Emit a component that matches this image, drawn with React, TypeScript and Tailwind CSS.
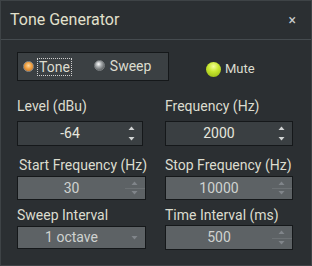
import React from "react";

const FONT = { fontFamily: 'Roboto, "Liberation Sans", sans-serif' };

function Spin({ disabled }: { disabled?: boolean }) {
  const c = disabled ? "#80858a" : "#d0d3d3";
  return (
    <div className="relative flex w-[20px] flex-col items-center justify-between py-[4px] pr-[2px]">
      {disabled && <div className="absolute left-0 right-0 top-1/2 h-px bg-[#6c7174]" />}
      <svg width="7" height="4" viewBox="0 0 7 4">
        <path d="M0.5 4 L3.5 0.5 L6.5 4 Z" fill={c} />
      </svg>
      <svg width="7" height="4" viewBox="0 0 7 4">
        <path d="M0.5 0 L3.5 3.5 L6.5 0 Z" fill={c} />
      </svg>
    </div>
  );
}

function NumBox({ value, disabled, w, h }: { value: string; disabled?: boolean; w: string; h: string }) {
  return (
    <div
      className={`flex ${w} ${h} border border-[#15181a] ${
        disabled ? "bg-[#5d6265] text-[#cfd2d0]" : "bg-[#3a3f42] text-[#e6e6de]"
      }`}
    >
      <div className="flex flex-1 items-center justify-center text-[14px]">{value}</div>
      <Spin disabled={disabled} />
    </div>
  );
}

function Radio({ on }: { on?: boolean }) {
  return (
    <span
      className={`inline-block h-[11px] w-[11px] rounded-full border ${
        on
          ? "border-[#8a8a86] bg-[radial-gradient(circle_at_50%_40%,#ffd9a0_0%,#f0a040_45%,#c06a20_100%)]"
          : "border-[#7a7e80] bg-[radial-gradient(circle_at_40%_35%,#ffffff_0%,#a8acae_35%,#3a3e40_100%)]"
      }`}
    />
  );
}

export default function App() {
  return (
    <div style={FONT} className="flex h-[266px] w-[312px] flex-col border border-[#3e4346] bg-[#2b2f32] text-[#dcdccf]">
      <div className="flex h-[39px] shrink-0 items-center justify-between border-b border-[#454b4f] pl-[9px] pr-[15px]">
        <span className="text-[16px] text-[#e2e0cc]">Tone Generator</span>
        <span className="text-[14px] text-[#c8cccc]">×</span>
      </div>

      <div className="px-[16px] pt-[12px]">
        <div className="flex items-center">
          <div className="flex h-[29px] w-[152px] items-center border border-[#15181a] bg-[#3b4043] pl-[5px] text-[14px]">
            <Radio on />
            <span className="ml-[3px] border border-dotted border-[#d0d0d0] px-px leading-[16px]">Tone</span>
            <span className="ml-[22px]">
              <Radio />
            </span>
            <span className="ml-[5px]">Sweep</span>
          </div>
          <div className="ml-[37px] mt-[5px] flex items-center">
            <span className="inline-block h-[15px] w-[15px] rounded-full bg-[radial-gradient(circle_at_50%_30%,#f4ff9a_0%,#c8e830_40%,#8fb010_100%)]" />
            <span className="ml-[4px] text-[13px]">Mute</span>
          </div>
        </div>

        <div className="mt-[15px] grid grid-cols-[148px_128px] text-[14px]">
          <div className="whitespace-nowrap leading-[20px]">Level (dBu)</div>
          <div className="whitespace-nowrap leading-[20px]">Frequency (Hz)</div>
          <div className="mt-[5px]">
            <NumBox value="-64" w="w-[126px]" h="h-[25px]" />
          </div>
          <div className="mt-[5px]">
            <NumBox value="2000" w="w-[128px]" h="h-[25px]" />
          </div>

          <div className="mt-[9px] whitespace-nowrap pl-[2px] leading-[20px]">Start Frequency (Hz)</div>
          <div className="mt-[9px] whitespace-nowrap leading-[20px]">Stop Frequency (Hz)</div>
          <div className="mt-[1px]">
            <NumBox value="30" disabled w="w-[129px]" h="h-[24px]" />
          </div>
          <div className="mt-[1px]">
            <NumBox value="10000" disabled w="w-[128px]" h="h-[24px]" />
          </div>

          <div className="mt-[5px] whitespace-nowrap leading-[20px]">Sweep Interval</div>
          <div className="mt-[5px] whitespace-nowrap leading-[20px]">Time Interval (ms)</div>
          <div className="mt-[1px]">
            <div className="flex h-[23px] w-[129px] border border-[#15181a] bg-[#5d6265] text-[#cfd2d0]">
              <div className="flex flex-1 items-center justify-center text-[14px]">1 octave</div>
              <div className="flex w-[20px] items-center justify-center pr-[2px]">
                <svg width="7" height="4" viewBox="0 0 7 4">
                  <path d="M0.5 0 L3.5 3.5 L6.5 0 Z" fill="#80858a" />
                </svg>
              </div>
            </div>
          </div>
          <div>
            <NumBox value="500" disabled w="w-[128px]" h="h-[25px]" />
          </div>
        </div>
      </div>
    </div>
  );
}
